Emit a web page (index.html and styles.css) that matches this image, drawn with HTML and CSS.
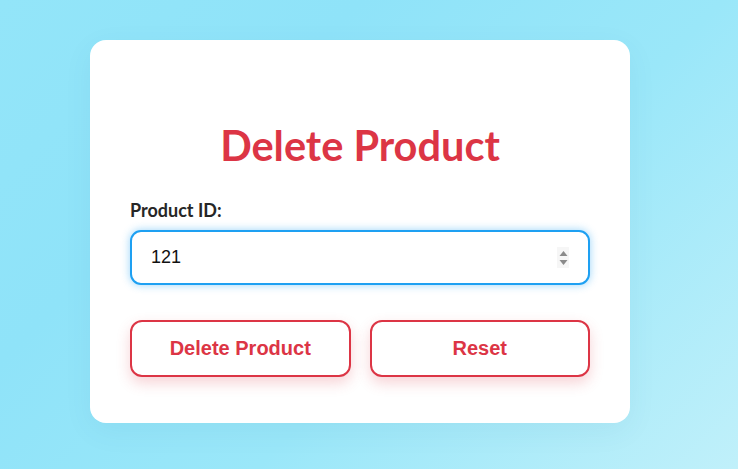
FILE: index.html
```html
<!DOCTYPE html>
<html lang="en">
<head>
<meta charset="utf-8">
<title>Delete Product</title>
<link rel="stylesheet" href="styles.css">
</head>
<body>
  <div class="card">
    <h2 class="title">Delete Product</h2>
    <form class="form">
      <label class="label" for="pid">Product ID:</label>
      <div class="field">
        <input class="input" id="pid" type="number" value="121">
        <span class="spinner" aria-hidden="true">
          <svg width="9" height="16" viewBox="0 0 9 16"><path d="M4.5 1 L8.5 6 L0.5 6 Z" fill="#8a8a8a"/><path d="M0.5 10 L8.5 10 L4.5 15 Z" fill="#8a8a8a"/></svg>
        </span>
      </div>
      <div class="actions">
        <button type="button" class="btn">Delete Product</button>
        <button type="button" class="btn">Reset</button>
      </div>
    </form>
  </div>
</body>
</html>
```
FILE: styles.css
```css
html, body {
  margin: 0;
  height: 100%;
}
body {
  background: linear-gradient(135deg, #93e5f9 0%, #8fe3f9 30%, #9ae7f9 60%, #c0f0fa 100%);
  padding: 40px 0 0 90px;
  box-sizing: border-box;
  font-family: Lato, "Liberation Sans", sans-serif;
}
.card {
  width: 540px;
  box-sizing: border-box;
  background: #fff;
  border-radius: 16px;
  padding: 80px 40px 46px;
  box-shadow: 0 8px 30px rgba(0, 80, 120, 0.06);
}
.title {
  margin: 0 0 30px;
  text-align: center;
  font-family: Lato, sans-serif;
  font-weight: 700;
  font-size: 41.5px;
  line-height: 50px;
  color: #dc3545;
}
.form {
  display: flex;
  flex-direction: column;
}
.label {
  font-family: Lato, sans-serif;
  font-weight: 700;
  font-size: 18px;
  line-height: 20px;
  color: #262626;
  margin-bottom: 10px;
}
.field {
  position: relative;
}
.input {
  display: block;
  width: 100%;
  box-sizing: border-box;
  height: 55px;
  padding: 0 18px 0 19px;
  border: 2px solid #1ea0f2;
  border-radius: 11px;
  font-family: "Liberation Sans", Arial, sans-serif;
  font-size: 18px;
  color: #111;
  background: #fff;
  outline: none;
  box-shadow: 0 0 8px rgba(30, 160, 242, 0.45);
  -moz-appearance: textfield;
}
.input::-webkit-outer-spin-button,
.input::-webkit-inner-spin-button {
  -webkit-appearance: none;
  margin: 0;
}
.spinner {
  position: absolute;
  right: 21px;
  top: 17px;
  width: 12px;
  height: 21px;
  background: #f6f6f6;
  display: flex;
  align-items: center;
  justify-content: center;
}
.actions {
  display: grid;
  grid-template-columns: 1fr 1fr;
  gap: 19px;
  margin-top: 35px;
}
.btn {
  height: 57px;
  background: #fff;
  border: 2px solid #dc3545;
  border-radius: 12px;
  color: #dc3545;
  font-family: "Liberation Sans", Arial, sans-serif;
  font-weight: 700;
  font-size: 20px;
  box-shadow: 0 6px 14px rgba(220, 53, 69, 0.22);
  cursor: pointer;
}
```
